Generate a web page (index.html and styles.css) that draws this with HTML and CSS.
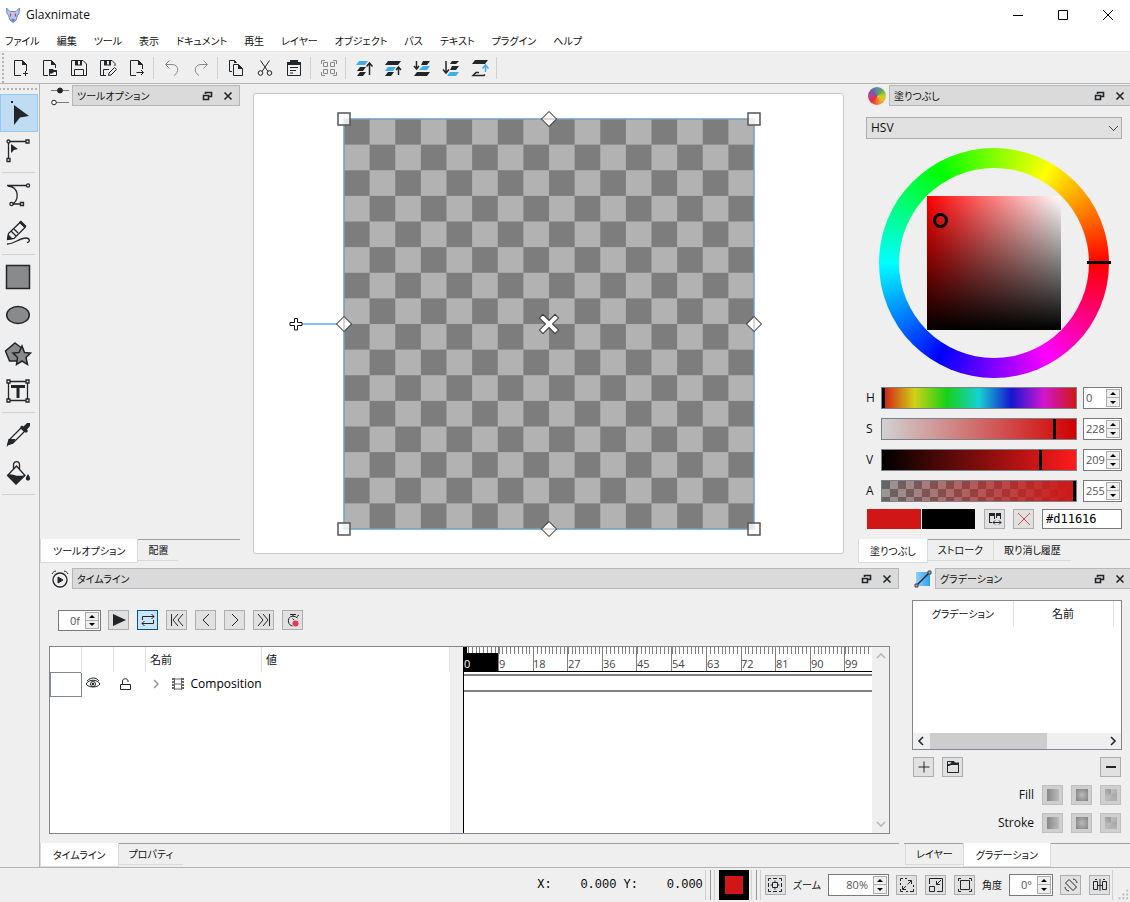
FILE: index.html
```html
<!DOCTYPE html>
<html lang="ja">
<head>
<meta charset="utf-8">
<title>Glaxnimate</title>
<link rel="stylesheet" href="styles.css">
</head>
<body>
<div class="app">
  <header class="titlebar">
    <svg class="logo" viewBox="0 0 14 16"><path d="M.5 1 4 4.500h6L13.500 1 13 6.500l-1.500 2L10 13l-3 2.500L4 13 2.500 8.500 1 6.500z" fill="#b5caf0" stroke="#6a84c4"/><path d="M4.500 6.500v3M9.500 6.500v3" stroke="#d83a4a" stroke-width="1.300"/><path d="M5 13l2 2 2-2-2-2z" fill="#5a86d8" stroke="none"/></svg>
    <h1>Glaxnimate</h1>
    <div class="window-buttons">
      <button aria-label="最小化"><svg viewBox="0 0 12 12"><path d="M1 6.500h10" /></svg></button>
      <button aria-label="最大化"><svg viewBox="0 0 12 12"><path d="M1.500 1.500h9v9h-9z"/></svg></button>
      <button aria-label="閉じる"><svg viewBox="0 0 12 12"><path d="M1 1l10 10M11 1 1 11"/></svg></button>
    </div>
  </header>

  <nav class="menubar">
    <button>ファイル</button><button>編集</button><button>ツール</button><button>表示</button><button>ドキュメント</button><button>再生</button><button>レイヤー</button><button>オブジェクト</button><button>パス</button><button>テキスト</button><button>プラグイン</button><button>ヘルプ</button>
  </nav>

  <div class="toolbar">
    <button aria-label="新規"><svg viewBox="0 0 18 18"><path d="M9 16.500H2.500v-15h8l4 4V12" /><path class="f" d="M10 1v5h5z"/><path d="M13.500 12v5M11 14.500h5"/></svg></button>
    <button aria-label="開く"><svg viewBox="0 0 18 18"><path d="M7 16.500H2.500v-15h8l4 4V9"/><path class="f" d="M10 1v5h5z"/><path d="M8.500 11.500h7v5h-7z"/><path class="f" d="M8 10h4l1 1.500h3V13h-3l-2 1.500H8z"/></svg></button>
    <button aria-label="保存"><svg viewBox="0 0 18 18"><path d="M1.500 1.500H13l3.500 3.500v11.500h-15z"/><path class="f" d="M5 1h3v5H5zM10 1h2v5h-2z"/><path d="M5 6h7M4.500 16.500v-6h9v6"/></svg></button>
    <button aria-label="名前を付けて保存"><svg viewBox="0 0 18 18"><path d="M7 16.500H1.500v-15H13l3 3V7"/><path class="f" d="M5 1h3v5H5zM10 1h2v5h-2z"/><path d="M5 6h7M4.500 16v-5.500H10M9.500 16.500l.5-2.500 5.500-5.500 2 2L12 16z"/></svg></button>
    <button aria-label="書き出し"><svg viewBox="0 0 18 18"><path d="M8 16.500H2.500v-15h8l4 4V10"/><path class="f" d="M10 1v5h5z"/><path d="M8.500 13.500h7M13 11l2.500 2.500L13 16"/></svg></button>
    <span class="sep"></span>
    <button class="dim" aria-label="元に戻す"><svg viewBox="0 0 18 18"><path d="M6.500 1.500l-4 4 4 4M3 5.500h6c7 0 7.500 8 2 11"/></svg></button>
    <button class="dim" aria-label="やり直す"><svg viewBox="0 0 18 18"><path d="M11.500 1.500l4 4-4 4M15 5.500H9c-7 0-7.500 8-2 11"/></svg></button>
    <span class="sep"></span>
    <button aria-label="コピー"><svg viewBox="0 0 18 18"><path d="M5 12.500H2.500v-11h5l2 2M6.500 5.500h5l4 4v7h-9z"/><path class="f" d="M7 1v3h3zM11 5v5h5z"/></svg></button>
    <button aria-label="切り取り"><svg viewBox="0 0 18 18"><path d="M4.500 1.500l7.500 11M13.500 1.500 6 12.500"/><circle cx="4.500" cy="14" r="2.300"/><circle cx="13.500" cy="14" r="2.300"/></svg></button>
    <button aria-label="貼り付け"><svg viewBox="0 0 18 18"><path d="M2.500 3.500h13v13h-13z"/><path class="f" d="M2 3h3V1h8v2h3v3H2z"/><path d="M5 8.500h8M5 11.500h6M5 14h3"/></svg></button>
    <span class="sep"></span>
    <button class="dim" aria-label="グループ化"><svg viewBox="0 0 18 18"><path d="M1.500 5V1.500H5M13 1.500h3.500V5M1.500 13v3.500H5M16.500 13v3.500H13M3.500 3.500h4v4h-4zM10.500 3.500h4v4h-4zM3.500 10.500h4v4h-4zM10.500 10.500h4v4h-4z"/></svg></button>
    <span class="sep"></span>
    <button aria-label="最前面へ"><svg viewBox="0 0 18 18"><path class="b" d="M4 2h9l-3 4H1z"/><path class="f" d="M5 8h6l-3 4H2zM5 13h6l-3 4H2z"/><path class="w" d="M14.500 16V4M11.500 7.500l3-3.500 3 3.500"/></svg></button>
    <button aria-label="前面へ"><svg viewBox="0 0 18 18"><path class="f" d="M4 2h13l-3 4H1zM4 13h6l-3 4H1z"/><path class="b" d="M4 8h8l-3 4H1z"/><path class="w" d="M14.500 16V8M12 11l2.500-3 2.500 3"/></svg></button>
    <button aria-label="背面へ"><svg viewBox="0 0 18 18"><path class="f" d="M10 2h7l-3 4H8zM4 13h13l-3 4H1z"/><path class="b" d="M10 7h7l-3 4H6z"/><path class="w" d="M3.500 2v8M1 7l2.500 3L6 7"/></svg></button>
    <button aria-label="最背面へ"><svg viewBox="0 0 18 18"><path class="f" d="M10 2h7l-3 3H8zM10 7h7l-3 4H8z"/><path class="b" d="M8 13h9l-3 4H5z"/><path class="w" d="M4 2v12M1 10.500 4 14l3-3.500"/></svg></button>
    <button aria-label="移動"><svg viewBox="0 0 18 18"><path class="f" d="M4 1h13l-3 4H1z"/><path class="w" d="M8 13.500H5L2 16.500h11l1-1"/><path class="u" d="M14.500 13V6M11.500 9.500l3-3.500 3 3.500"/></svg></button>
    <span class="sep"></span>
  </div>

  <div class="body">
    <aside class="tools">
      <button class="on" aria-label="選択"><svg viewBox="0 0 26 26"><path class="f" d="M9 5l15 11-9 1.500L9 25zM6 1h2v2H6z"/></svg></button>
      <button aria-label="編集"><svg viewBox="0 0 26 26"><path d="M3.500 4v18M5 3.500h18"/><circle class="e" cx="3.500" cy="3.500" r="1.500"/><path class="e" d="M21 2h3v3h-3zM2 20.500h3v3H2z"/><path class="f" d="M6 6l7 5-4 1-3 3z"/></svg></button>
      <span class="sep"></span>
      <button aria-label="ベジェ"><svg viewBox="0 0 26 26"><path d="M2 3.500h21M3 4c12 1 11 16 4 18h9"/><circle class="e" cx="23" cy="3.500" r="1.600"/><circle class="e" cx="6.500" cy="22" r="1.600"/><path class="e" d="M15.500 20.500h3v3h-3z"/></svg></button>
      <button aria-label="フリーハンド"><svg viewBox="0 0 26 26"><path d="M2.500 19.500l1-6L15 2.500l5 5L9 18.500z"/><path class="f" d="M2 20l1-6 5 5zM14 2l2-1.500 5.500 5.500L20 8z"/><path d="M6 11l5 5M9 9l4 4M2 24c7 .5 12-6 19-6 4 0 4.500 4 1 4.500"/></svg></button>
      <span class="sep"></span>
      <button aria-label="長方形"><svg viewBox="0 0 26 26"><path class="g" d="M1.500 1.500h23v23h-23z"/></svg></button>
      <button aria-label="楕円"><svg viewBox="0 0 26 26"><ellipse class="g" cx="13" cy="13" rx="11.300" ry="8.500"/></svg></button>
      <button aria-label="図形"><svg viewBox="0 0 26 26"><path class="g" d="M10 3l8 6-3 12H4.500L.5 11z"/><path class="g" d="M17 6l2.500 6.500 6 .5-4.500 4.500 1.500 7L17 21l-5.500 3.500 1-7L8 13l6-.5z"/></svg></button>
      <button aria-label="テキスト"><svg viewBox="0 0 26 26"><path d="M3.500 3.500h19v19h-19z"/><path class="e" d="M2 2h3v3H2zM21 2h3v3h-3zM2 21h3v3H2zM21 21h3v3h-3z"/><path class="f" d="M6 7h14v3h-5.500v10h-3V10H6z"/></svg></button>
      <span class="sep"></span>
      <button aria-label="スポイト"><svg viewBox="0 0 26 26"><path d="M3 22.500l1.500-5L16 6l3.500 3.500L8 21z"/><path class="f" d="M1.500 25l2-8h7L8 21.500 3.500 23zM15 5l2-1.500 1.500 1L22 1h3v3l-3 3.500 1 1.500-2 2z"/></svg></button>
      <button aria-label="塗りつぶし"><svg viewBox="0 0 26 26"><path d="M11.500 6 2.500 15.500l8.500 8.500 9-8.500zM8.500 9V5c0-4.500 6-4.500 6 0v4"/><path class="f" d="M2 15c5-3 8 3 18 0l-9 9.500zM23 14c3 4 2.500 6.500 0 6.500S20 18 23 14z"/></svg></button>
      <span class="sep"></span>
    </aside>

    <main class="docks">
      <div class="upper">
        <section class="dock side-left">
          <div class="dock-head">
            <svg class="dock-icon" viewBox="0 0 18 18"><path d="M0 3.500h18M4 15.500h14" stroke="#7a7a7a"/><circle cx="9" cy="3.500" r="2.500" fill="#232629"/><circle cx="3" cy="15.500" r="2.300" fill="#fff" stroke="#232629"/></svg>
            <div class="dock-title"><h2>ツールオプション</h2>
              <button aria-label="分離"><svg viewBox="0 0 10 10"><path d="M3.500 3V1.500h6v4H7M1.500 4.500h5v4h-5z"/></svg></button>
              <button aria-label="閉じる"><svg viewBox="0 0 10 10"><path d="M1.500 1.500l7 7M8.500 1.500l-7 7"/></svg></button></div>
          </div>
          <div class="dock-body"></div>
          <div class="tabs"><button class="active">ツールオプション</button><button>配置</button></div>
        </section>

        <section class="canvas">
          <svg viewBox="0 0 530 430" width="530" height="430">
            <defs>
              <pattern id="checker" width="51.250" height="51.250" patternUnits="userSpaceOnUse" x="60" y="10">
                <path fill="#b2b2b2" d="M0 0h51.250v51.250H0z"/><path fill="#7d7d7d" d="M0 0h25.625v25.625H0zM25.625 25.625H51.250V51.250H25.625z"/>
              </pattern>
              <path id="diamond" d="M0-7.500 7.500 0 0 7.500-7.500 0z" fill="#fff" stroke="#111"/>
              <path id="corner" d="M-6-6H6V6H-6z" fill="#fff" fill-opacity=".8" stroke="#555" stroke-width="1.500"/>
            </defs>
            <path d="M60 10h410v410H60z" fill="url(#checker)" stroke="#6f9fc4" stroke-width="1.500"/>
            <path d="M14 215h46" stroke="#62aef0" stroke-width="1.500"/>
            <use href="#corner" x="60" y="10"/><use href="#corner" x="470" y="10"/><use href="#corner" x="60" y="420"/><use href="#corner" x="470" y="420"/>
            <use href="#diamond" x="265" y="10"/><use href="#diamond" x="265" y="420"/><use href="#diamond" x="60" y="215"/><use href="#diamond" x="470" y="215"/>
            <path d="M259 10h12M259 420h12M60 209v12M470 209v12" stroke="#ccc" stroke-width="1.500"/>
            <path d="M10.500 209.500h3v4h4.500v3h-4.500v4.500h-3v-4.500H6v-3h4.500z" fill="#fff" stroke="#111"/>
            <path transform="translate(265 215) rotate(45)" d="M-2.500-11h5v8.500H11v5H2.500V11h-5V2.500H-11v-5h8.500z" fill="#fff" stroke="#333"/>
          </svg>
        </section>

        <section class="dock side-right">
          <div class="dock-head">
            <span class="dock-icon hue-icon"></span>
            <div class="dock-title"><h2>塗りつぶし</h2>
              <button aria-label="分離"><svg viewBox="0 0 10 10"><path d="M3.500 3V1.500h6v4H7M1.500 4.500h5v4h-5z"/></svg></button>
              <button aria-label="閉じる"><svg viewBox="0 0 10 10"><path d="M1.500 1.500l7 7M8.500 1.500l-7 7"/></svg></button></div>
          </div>
          <div class="dock-body color-body">
            <select class="combo" aria-label="色空間"><option>HSV</option></select>
            <div class="wheel"><div class="wheel-hole"><div class="sv"><span class="sv-mark"></span></div></div><span class="hue-mark"></span></div>
            <div class="channels">
              <label for="h">H</label><input id="h" class="slider hue" type="range" min="0" max="360" value="0"><div class="spin"><input aria-label="H値" value="0"><div><button aria-label="増"></button><button aria-label="減"></button></div></div>
              <label for="s">S</label><input id="s" class="slider sat" type="range" max="255" value="228"><div class="spin"><input aria-label="S値" value="228"><div><button aria-label="増"></button><button aria-label="減"></button></div></div>
              <label for="v">V</label><input id="v" class="slider val" type="range" max="255" value="209"><div class="spin"><input aria-label="V値" value="209"><div><button aria-label="増"></button><button aria-label="減"></button></div></div>
              <label for="a">A</label><input id="a" class="slider alpha" type="range" max="255" value="255"><div class="spin"><input aria-label="A値" value="255"><div><button aria-label="増"></button><button aria-label="減"></button></div></div>
            </div>
            <div class="swatch-row">
              <div class="swatches"><span class="red"></span><span class="black"></span></div>
              <button class="btn" aria-label="入れ替え"><svg viewBox="0 0 16 16"><path d="M2.500 12V3M2.500 11.500H5M7.500 3v5M9.500 3v4M13.500 3v5"/><path class="f" d="M2 2h6v3H2zM9 2h5v3H9z"/><path d="M6 11.500h8M8 9.500l-2 2 2 2M12 9.500l2 2-2 2"/></svg></button>
              <button class="btn" aria-label="なし"><svg class="none" viewBox="0 0 16 16"><path d="M2 2l12 12M14 2 2 14"/></svg></button>
              <input class="hex" aria-label="色コード" value="#d11616">
            </div>
          </div>
          <div class="tabs"><button class="active">塗りつぶし</button><button>ストローク</button><button>取り消し履歴</button></div>
        </section>
      </div>

      <div class="lower">
        <section class="dock timeline">
          <div class="dock-head">
            <svg class="dock-icon" viewBox="0 0 18 18"><circle cx="9" cy="10" r="7" fill="none" stroke="#232629" stroke-width="1.300"/><path d="M7 7l5 3-5 3z" fill="#232629"/><path d="M1 4c1-2 2-2.500 4-3M17 4c-1-2-2-2.500-4-3" fill="none" stroke="#232629"/></svg>
            <div class="dock-title"><h2>タイムライン</h2>
              <button aria-label="分離"><svg viewBox="0 0 10 10"><path d="M3.500 3V1.500h6v4H7M1.500 4.500h5v4h-5z"/></svg></button>
              <button aria-label="閉じる"><svg viewBox="0 0 10 10"><path d="M1.500 1.500l7 7M8.500 1.500l-7 7"/></svg></button></div>
          </div>
          <div class="playback">
            <div class="spin frame"><input aria-label="フレーム" value="0f"><div><button aria-label="増"></button><button aria-label="減"></button></div></div>
            <button class="btn" aria-label="再生"><svg viewBox="0 0 16 16"><path class="f" d="M2 2l13 6L2 14z"/></svg></button>
            <button class="btn checked" aria-label="ループ"><svg viewBox="0 0 16 16"><path d="M2.500 8V4.500H14M11.500 2 14 4.500 11.500 7M13.500 8v3.500H2M4.500 9 2 11.500 4.500 14"/></svg></button>
            <button class="btn" aria-label="最初"><svg viewBox="0 0 16 16"><path d="M2.500 2v12M9 2 4 8l5 6M14 2 9 8l5 6"/></svg></button>
            <button class="btn" aria-label="前"><svg viewBox="0 0 16 16"><path d="M11 2 5 8l6 6"/></svg></button>
            <button class="btn" aria-label="次"><svg viewBox="0 0 16 16"><path d="M5 2l6 6-6 6"/></svg></button>
            <button class="btn" aria-label="最後"><svg viewBox="0 0 16 16"><path d="M13.500 2v12M7 2l5 6-5 6M2 2l5 6-5 6"/></svg></button>
            <button class="btn" aria-label="記録"><svg viewBox="0 0 16 16"><path d="M5 2.500h6M8 2.500V5M12.500 6c-5-4-10-1-9 4 .5 2.500 2 3.500 4 4M9 8 7.500 6.500M12 4.500l2-1.500"/><circle class="dot" cx="10.500" cy="11.500" r="3"/></svg></button>
          </div>
          <div class="track-frame">
            <table class="tree">
              <colgroup><col class="c0"><col class="c1"><col class="c1"><col class="c2"><col></colgroup>
              <thead><tr><th></th><th></th><th></th><th>名前</th><th>値</th></tr></thead>
              <tbody><tr>
                <td class="color-cell"></td>
                <td><svg class="ic" viewBox="0 0 16 16"><path d="M1 8c3-5 11-5 14 0-3 4-11 4-14 0zM2 5c4-4 9-4 12 0"/><circle cx="8" cy="8" r="2.500"/><circle class="f" cx="8" cy="8" r="1.200"/></svg></td>
                <td><svg class="ic" viewBox="0 0 16 16"><path d="M3.500 8.500h10v5h-10zM5.500 8V5c0-3 5.500-3 5.500 0v1"/></svg></td>
                <td colspan="2"><div class="node"><svg class="ic chev" viewBox="0 0 16 16"><path d="M6 4l4 4-4 4"/></svg><svg class="ic film" viewBox="0 0 16 16"><path d="M3 2v12M13 2v12" stroke-width="2" stroke-dasharray="2 1"/><path d="M4.500 2v12M11.500 2v12M4 3h8M4 8h8M4 13h8"/></svg>Composition</div></td>
              </tr></tbody>
            </table>
            <div class="splitter"></div>
            <div class="frames">
              <svg width="408" height="46" viewBox="0 0 408 46">
                <path d="M0 3.500h405" stroke="#808080" stroke-width="7" stroke-dasharray="1 2.844"/>
                <path d="M34.500 0v24M69.500 0v24M103.500 0v24M138.500 0v24M172.500 0v24M207.500 0v24M242.500 0v24M277.500 0v24M311.500 0v24M346.500 0v24M380.500 0v24" stroke="#808080"/>
                <path d="M0 0h3v6h31v19H0z"/>
                <path d="M0 24.500h408" stroke="#000"/><path d="M0 28h408M0 44h408" stroke="#808080" stroke-width="2"/>
                <g class="labels"><text x="0" y="21">0</text><text x="35" y="21">9</text><text x="69" y="21">18</text><text x="104" y="21">27</text><text x="139" y="21">36</text><text x="173" y="21">45</text><text x="208" y="21">54</text><text x="243" y="21">63</text><text x="277" y="21">72</text><text x="312" y="21">81</text><text x="347" y="21">90</text><text x="381" y="21">99</text></g>
              </svg>
            </div>
            <div class="vscroll"><svg viewBox="0 0 10 10"><path d="M1 7l4-4 4 4"/></svg><svg viewBox="0 0 10 10"><path d="M1 3l4 4 4-4"/></svg></div>
          </div>
          <div class="tabs"><button class="active">タイムライン</button><button>プロパティ</button></div>
        </section>

        <section class="dock gradients">
          <div class="dock-head">
            <svg class="dock-icon" viewBox="0 0 18 18"><defs><linearGradient id="sky" x2="1"><stop stop-color="#8fd0ff"/><stop offset="1" stop-color="#2b9cf0"/></linearGradient></defs><path d="M2 2h14v14H2z" fill="url(#sky)" stroke="none"/><path d="M2.500 15.500l13-13" stroke="#232629" stroke-width="1.500"/><path d="M1 14h3v3H1zM14 1h3v3h-3z" fill="#9ab" stroke="#444"/></svg>
            <div class="dock-title"><h2>グラデーション</h2>
              <button aria-label="分離"><svg viewBox="0 0 10 10"><path d="M3.500 3V1.500h6v4H7M1.500 4.500h5v4h-5z"/></svg></button>
              <button aria-label="閉じる"><svg viewBox="0 0 10 10"><path d="M1.500 1.500l7 7M8.500 1.500l-7 7"/></svg></button></div>
          </div>
          <div class="grad-body">
            <div class="grad-list">
              <table><thead><tr><th class="kana">グラデーション</th><th>名前</th><th class="rest"></th></tr></thead></table>
              <div class="hscroll"><svg viewBox="0 0 10 10"><path d="M7 1 3 5l4 4"/></svg><div class="hrail"><span></span></div><svg viewBox="0 0 10 10"><path d="M3 1l4 4-4 4"/></svg></div>
            </div>
            <div class="grad-actions">
              <button class="btn" aria-label="追加"><svg viewBox="0 0 16 16"><path d="M8 2.500v11M2.500 8h11"/></svg></button>
              <button class="btn" aria-label="プリセット"><svg viewBox="0 0 16 16"><path d="M2.500 13.500v-11H7l1 2h5.500v9z"/><path class="f" d="M7 2h2l1 1.500h4V6H6L4 7H2V5h3z"/></svg></button>
              <button class="btn push" aria-label="削除"><svg viewBox="0 0 16 16"><path d="M3 8h10" stroke-width="2"/></svg></button>
            </div>
            <div class="grad-row"><span>Fill</span><button class="btn off" aria-label="線形"><i class="lin"></i></button><button class="btn off" aria-label="放射"><i class="rad"></i></button><button class="btn off" aria-label="円錐"><i class="con"></i></button></div>
            <div class="grad-row"><span>Stroke</span><button class="btn off" aria-label="線形"><i class="lin"></i></button><button class="btn off" aria-label="放射"><i class="rad"></i></button><button class="btn off" aria-label="円錐"><i class="con"></i></button></div>
          </div>
          <div class="tabs"><button>レイヤー</button><button class="active">グラデーション</button></div>
        </section>
      </div>
    </main>
  </div>

  <footer class="status">
    <pre>X:    0.000 Y:    0.000</pre>
    <span class="grip-bar"></span>
    <span class="current-color"></span>
    <span class="grip-bar"></span>
    <button class="btn" aria-label="全体表示"><svg viewBox="0 0 16 16"><path d="M1.500 4V1.500H4M6 1.500h4M12 1.500h2.500V4M14.500 6v4M14.500 12v2.500H12M10 14.500H6M4 14.500H1.500V12M1.500 10V6M5.500 5.500h5v5h-5z"/><path d="M8 3.500v2M8 10.500v2M3.500 8h2M10.500 8h2"/></svg></button>
    <label for="zoom">ズーム</label>
    <div class="spin zoom"><input id="zoom" value="80%"><div><button aria-label="増"></button><button aria-label="減"></button></div></div>
    <button class="btn" aria-label="ズームイン"><svg viewBox="0 0 16 16"><path d="M1.500 4V1.500H4M11 14.500h3.500V12M1.500 12v2.500H4M9 3.500h3.500V7M12 4 8.500 7.500M3.500 9v3.500H7M4 12l3-3M6 1.500h2M1.500 6v2M14.500 8v2M7 14.500h2"/></svg></button>
    <button class="btn" aria-label="ズームアウト"><svg viewBox="0 0 16 16"><path d="M1.500 7V1.500h13v13H9M1.500 9.500h5v5h-5zM13 3 8.500 7.500M8.500 4v3.500H12"/></svg></button>
    <button class="btn" aria-label="等倍"><svg viewBox="0 0 16 16"><path d="M3.500 3.500h9v9h-9zM1.500 4V1.500H4M12 1.500h2.500V4M14.500 12v2.500H12M4 14.500H1.500V12"/></svg></button>
    <label for="angle">角度</label>
    <div class="spin angle"><input id="angle" value="0°"><div><button aria-label="増"></button><button aria-label="減"></button></div></div>
    <button class="btn" aria-label="回転リセット"><svg viewBox="0 0 16 16"><path d="M2.500 6 6 2.500l7.500 7.500L10 13.500zM10 2c2.500.5 4 2 4 4M6 14c-2.500-.5-4-2-4-4"/></svg></button>
    <button class="btn" aria-label="反転"><svg viewBox="0 0 16 16"><path d="M1.500 4.500h4v8h-4zM10.500 4.500h4v8h-4zM8 2v12M5 8.500h6M3 2.500h2M11 2.500h2"/></svg></button>
    <svg class="size-grip" viewBox="0 0 18 30"><path d="M14 20h2v2h-2zM10 24h2v2h-2zM14 24h2v2h-2zM6 28h2v2H6zM10 28h2v2h-2zM14 28h2v2h-2z"/></svg>
  </footer>
</div>
</body>
</html>
```
FILE: styles.css
```css
* { box-sizing: border-box; }
body { margin: 0; background: #efefef; color: #111; font: 12px/16px "Open Sans", "Noto Sans CJK JP", sans-serif; font-feature-settings: "palt"; }
button, input, select { font: inherit; color: inherit; font-feature-settings: inherit; margin: 0; padding: 0; border: 0; border-radius: 0; background: none; }
h1, h2, pre { margin: 0; font: inherit; }
svg { display: block; fill: none; stroke: #232629; overflow: visible; }
.f { fill: #232629; stroke: none; }
.b { fill: #3daee9; stroke: none; }
.u { stroke: #3daee9; stroke-width: 1.5; }
.w { stroke-width: 1.5; }
.e { fill: #efefef; }
.g { fill: #888a8c; stroke-width: 1.5; }
.dot { fill: #e8384f; stroke: none; }
.none { stroke: #da4453; }
.app { display: flex; flex-direction: column; min-height: 100vh; }

.titlebar { display: flex; align-items: center; height: 29px; padding-left: 6px; background: #fff; }
.logo { width: 14px; height: 16px; margin-right: 6px; }
.titlebar h1 { flex: 1; }
.window-buttons { display: flex; }
.window-buttons button { width: 45px; height: 29px; display: grid; place-items: center; }
.window-buttons svg { width: 12px; height: 12px; stroke: #000; }

.menubar { display: flex; gap: 17px; align-items: center; height: 23px; padding: 2px 0 0 5px; background: #fff; border-bottom: 1px solid #e6e6e6; font-size: 10px; }

.toolbar { display: flex; align-items: center; height: 32px; padding-left: 6px; border-bottom: 1px solid #b4b4b4; background: radial-gradient(circle, #b4b4b4 1px, transparent 1px) 1px 4px / 4px 4px repeat-y; }
.toolbar button { width: 29px; height: 28px; display: grid; place-items: center; }
.toolbar svg { width: 18px; height: 18px; }
.toolbar .dim svg { stroke: #888; }
.toolbar .sep { width: 1px; height: 22px; margin: 0 3px 0 2px; background: #d0d0d0; }

.body { flex: 1; display: flex; }
.tools { flex: none; width: 40px; padding-top: 10px; border-right: 1px solid #b4b4b4; background: radial-gradient(circle, #b4b4b4 1px, transparent 1px) 2px 3px / 4px 4px repeat-x; }
.tools button { width: 38px; height: 38px; display: grid; place-items: center; padding-right: 2px; }
.tools button.on { background: #c0dcf3; border: 1px solid #90c8f6; }
.tools svg { width: 26px; height: 26px; stroke-width: 1.3; }
.tools .sep { display: block; height: 1px; margin: 2px 4px 3px 2px; background: #d0d0d0; }

.docks { flex: 1; min-width: 0; display: flex; flex-direction: column; gap: 5px; padding-top: 1px; }
.upper, .lower { display: flex; }
.upper { flex: 1; }
.dock { display: flex; flex-direction: column; min-width: 0; }
.side-left { flex: none; width: 200px; }
.side-right { flex: none; width: 272px; }
.canvas { flex: 1; min-width: 0; display: grid; place-items: center; margin: 8px 14px 9px 13px; background: #fff; border: 1px solid #c9c9c9; border-radius: 3px; overflow: hidden; }
.canvas svg { stroke: none; }

.dock-head { display: flex; gap: 3px; padding-left: 11px; align-items: center; }
.dock-icon { flex: none; width: 18px; height: 18px; }
.hue-icon { border-radius: 50%; background: conic-gradient(#5b8fa0, #6aa84f, #c3d42a, #f0b429, #f07030, #ea2a45, #c2408a, #6a5fae, #5b8fa0); }
.dock-title { flex: 1; display: flex; align-items: center; height: 21px; padding: 0 1px 0 4px; border: 1px solid #b7b7b7; background: #dadada; }
.side-right .dock-title, .gradients .dock-title { padding-right: 0; border-right: 0; }
.dock-title h2 { flex: 1; font-size: 10px; }
.dock-title button { width: 21px; display: grid; place-items: center; }
.dock-title svg { width: 10px; height: 10px; stroke-width: 1.6; }
.dock-body { flex: 1; }

.tabs { display: flex; align-items: flex-start; height: 24px; border-top: 1px solid #a0a0a0; font-size: 10px; }
.tabs button { height: 21px; padding: 0 10px; border: 1px solid #dadada; border-width: 0 0 1px 1px; }
.tabs .active { height: 24px; margin-top: -1px; padding: 0 12px; background: #fff; border-width: 0 1px 1px; }
.tabs .active + button { border-left: 0; }

.side-right .dock-head { padding-left: 10px; }
.color-body { padding: 11px 8px 0; }
.combo { display: block; width: 100%; height: 22px; padding-left: 4px; appearance: none; border: 1px solid #adadad; background: #e1e1e1; background-image: linear-gradient(-45deg, transparent 45%, #444 45%, #444 55%, transparent 55%), linear-gradient(45deg, transparent 45%, #444 45%, #444 55%, transparent 55%); background-size: 5px 5px; background-position: right 3px center, right 7px center; background-repeat: no-repeat; }
.wheel { position: relative; width: 230px; height: 230px; margin: 9px auto; display: grid; place-items: center; border-radius: 50%; background: conic-gradient(from 90deg, #f00, #f0f, #00f, #0ff, #0f0, #ff0, #f00); }
.wheel-hole { width: 190px; height: 190px; display: grid; place-items: center; border-radius: 50%; background: #efefef; }
.sv { position: relative; width: 134px; height: 134px; background: linear-gradient(transparent, #000), linear-gradient(90deg, #f00, #fff); }
.sv-mark { position: absolute; left: 6px; top: 17px; width: 15px; height: 15px; border: 3px solid #000; border-radius: 50%; }
.hue-mark { position: absolute; right: -2px; top: 113px; width: 24px; height: 3px; background: #000; }
.channels { display: grid; grid-template-columns: 9px 1fr 39px; column-gap: 6px; row-gap: 9px; align-items: center; font-size: 12px; }
.slider { appearance: none; width: 100%; height: 22px; border: 1px solid #7a7f88; }
.slider::-webkit-slider-thumb { appearance: none; width: 3px; height: 20px; background: #000; }
.hue { background: linear-gradient(90deg, #d11616, #d1d116, #16d116, #16d1d1, #1616d1, #d116d1, #d11616); }
.sat { background: linear-gradient(90deg, #d1d1d1, #d10000); }
.val { background: linear-gradient(90deg, #000, #ff1b1b); }
.alpha { background: linear-gradient(90deg, transparent, #d11616), repeating-conic-gradient(#999 0 25%, #666 0 50%) 0 0 / 16px 16px; }
.spin { display: flex; height: 22px; padding: 1px; border: 1px solid #7a7a7a; background: #fff; }
.spin input { flex: 1; min-width: 0; width: 0; padding-left: 1px; font-size: 11px; color: #555; }
.spin > div { width: 14px; display: grid; grid-template-rows: 1fr 1fr; }
.spin button { display: grid; place-items: center; border: 1px solid #adadad; background: #efefef; }
.spin button + button { border-top: 0; }
.spin button::before { content: ""; border: 3px solid transparent; border-top: 0; border-bottom: 3px solid #000; }
.spin button + button::before { border-bottom: 0; border-top: 3px solid #000; }
.btn { flex: none; width: 21px; height: 20px; display: grid; place-items: center; border: 1px solid #adadad; background: #e1e1e1; }
.btn svg { width: 16px; height: 16px; }
.btn.checked { border-color: #00549a; background: #cce4f7; }
.btn.off { background: #cfcfcf; border-color: #bfbfbf; }
.btn i { width: 12px; height: 12px; }
.swatch-row { display: flex; gap: 8px; margin-top: 7px; padding-left: 1px; padding-bottom: 10px; }
.swatches { flex: 1; display: flex; gap: 1px; margin-right: 1px; }
.swatches span { flex: 1; }
.red { background: #d11616; }
.black { background: #000; }
.hex { width: 80px; height: 20px; padding-left: 3px; border: 1px solid #7a7a7a; background: #fff; font-family: "DejaVu Sans Mono", monospace; color: #000; }
.side-right .tabs .active { padding: 0 11px; }

.timeline { flex: 1; }
.playback { display: flex; gap: 8px; padding: 21px 0 15px 18px; }
.frame { width: 43px; height: 21px; margin-right: -1px; }
.frame input { text-align: right; padding-right: 5px; }
.track-frame { display: flex; height: 188px; margin: 0 9px 9px; border: 1px solid #828790; background: #fff; }
.tree { align-self: flex-start; width: 400px; border-collapse: collapse; table-layout: fixed; }
.c0 { width: 31px; }
.c1 { width: 32px; }
.c2 { width: 116px; }
.tree th { height: 25px; padding: 0 4px; border-right: 1px solid #e0e0e0; font-weight: 400; font-size: 11px; text-align: left; }
.tree td { height: 24px; padding: 0; color: #000; }
.tree .color-cell { border: 1px solid #828790; }
.tree td > .ic { margin-left: 3px; }
.ic { width: 16px; height: 16px; }
.node { display: flex; align-items: center; gap: 6px; padding-left: 2px; }
.chev { stroke: #999; stroke-width: 1.5; }
.film { stroke: #666; margin-right: -1px; }
.splitter { flex: none; width: 13px; background: #efefef; }
.frames { flex: 1; min-width: 0; overflow: hidden; border-left: 1px solid #000; }
.labels text { fill: #444; stroke: none; font-size: 11px; }
.labels text:first-child { fill: #fff; }
.frames svg { stroke: none; fill: #000; shape-rendering: crispEdges; }
.vscroll { flex: none; width: 17px; display: flex; flex-direction: column; justify-content: space-between; align-items: center; padding: 4px 0; background: #efefef; }
.vscroll svg, .hscroll svg { width: 10px; height: 10px; stroke-width: 1.6; }
.vscroll svg { stroke: #b8b8b8; }

.gradients { flex: none; width: 226px; margin-left: 5px; }
.gradients .dock-head { padding-left: 10px; }
.grad-body { flex: 1; padding: 11px 8px 0; }
.grad-list { display: flex; flex-direction: column; justify-content: space-between; height: 150px; border: 1px solid #828790; background: #fff; }
.grad-list table { width: 100%; border-collapse: collapse; }
.grad-list th { width: 100px; height: 25px; padding: 0; border-right: 1px solid #e0e0e0; font-weight: 400; font-size: 11px; }
.grad-list .kana { font-size: 10px; }
.grad-list .rest { width: auto; border: 0; }
.hscroll { display: flex; align-items: center; gap: 4px; height: 16px; padding: 0 3px; background: #efefef; }
.hrail { flex: 1; height: 16px; }
.hrail span { display: block; width: 67%; height: 16px; background: #cdcdcd; }
.grad-actions, .grad-row { display: flex; gap: 8px; margin: 7px 1px 0; }
.push { margin-left: auto; }
.grad-row { justify-content: flex-end; align-items: center; margin-top: 8px; }
.lin { background: linear-gradient(90deg, #888, #bbb); }
.rad { background: radial-gradient(#bbb, #808080); }
.con { background: conic-gradient(#c0c0c0, #aaa 90deg, #bbb 240deg, #999); }
.gradients .tabs { padding-left: 1px; }

.status { display: flex; align-items: center; gap: 7px; height: 36px; padding-bottom: 1px; border-top: 1px solid #b4b4b4; justify-content: flex-end; font-size: 11px; }
.status pre { font: 12px/16px "Liberation Mono", monospace; margin-right: -5px; color: #000; }
.status label { font-size: 10px; }
.grip-bar { width: 10px; height: 30px; border: 1px solid #d0d0d0; border-width: 0 1px; background: linear-gradient(#999, #999) 4px 0 / 1px 100% no-repeat; margin-right: -3px; }
.current-color { width: 30px; height: 30px; border: 6px solid #000; background: #d11616; margin-right: -5px; }
.status .btn + .btn { margin-left: 1px; }
.zoom { width: 61px; }
.angle { width: 44px; }
.status .spin input { text-align: right; padding-right: 5px; }
.size-grip { width: 18px; height: 30px; margin-left: -5px; border-left: 1px solid #d0d0d0; stroke: none; fill: #bbb; }
```
